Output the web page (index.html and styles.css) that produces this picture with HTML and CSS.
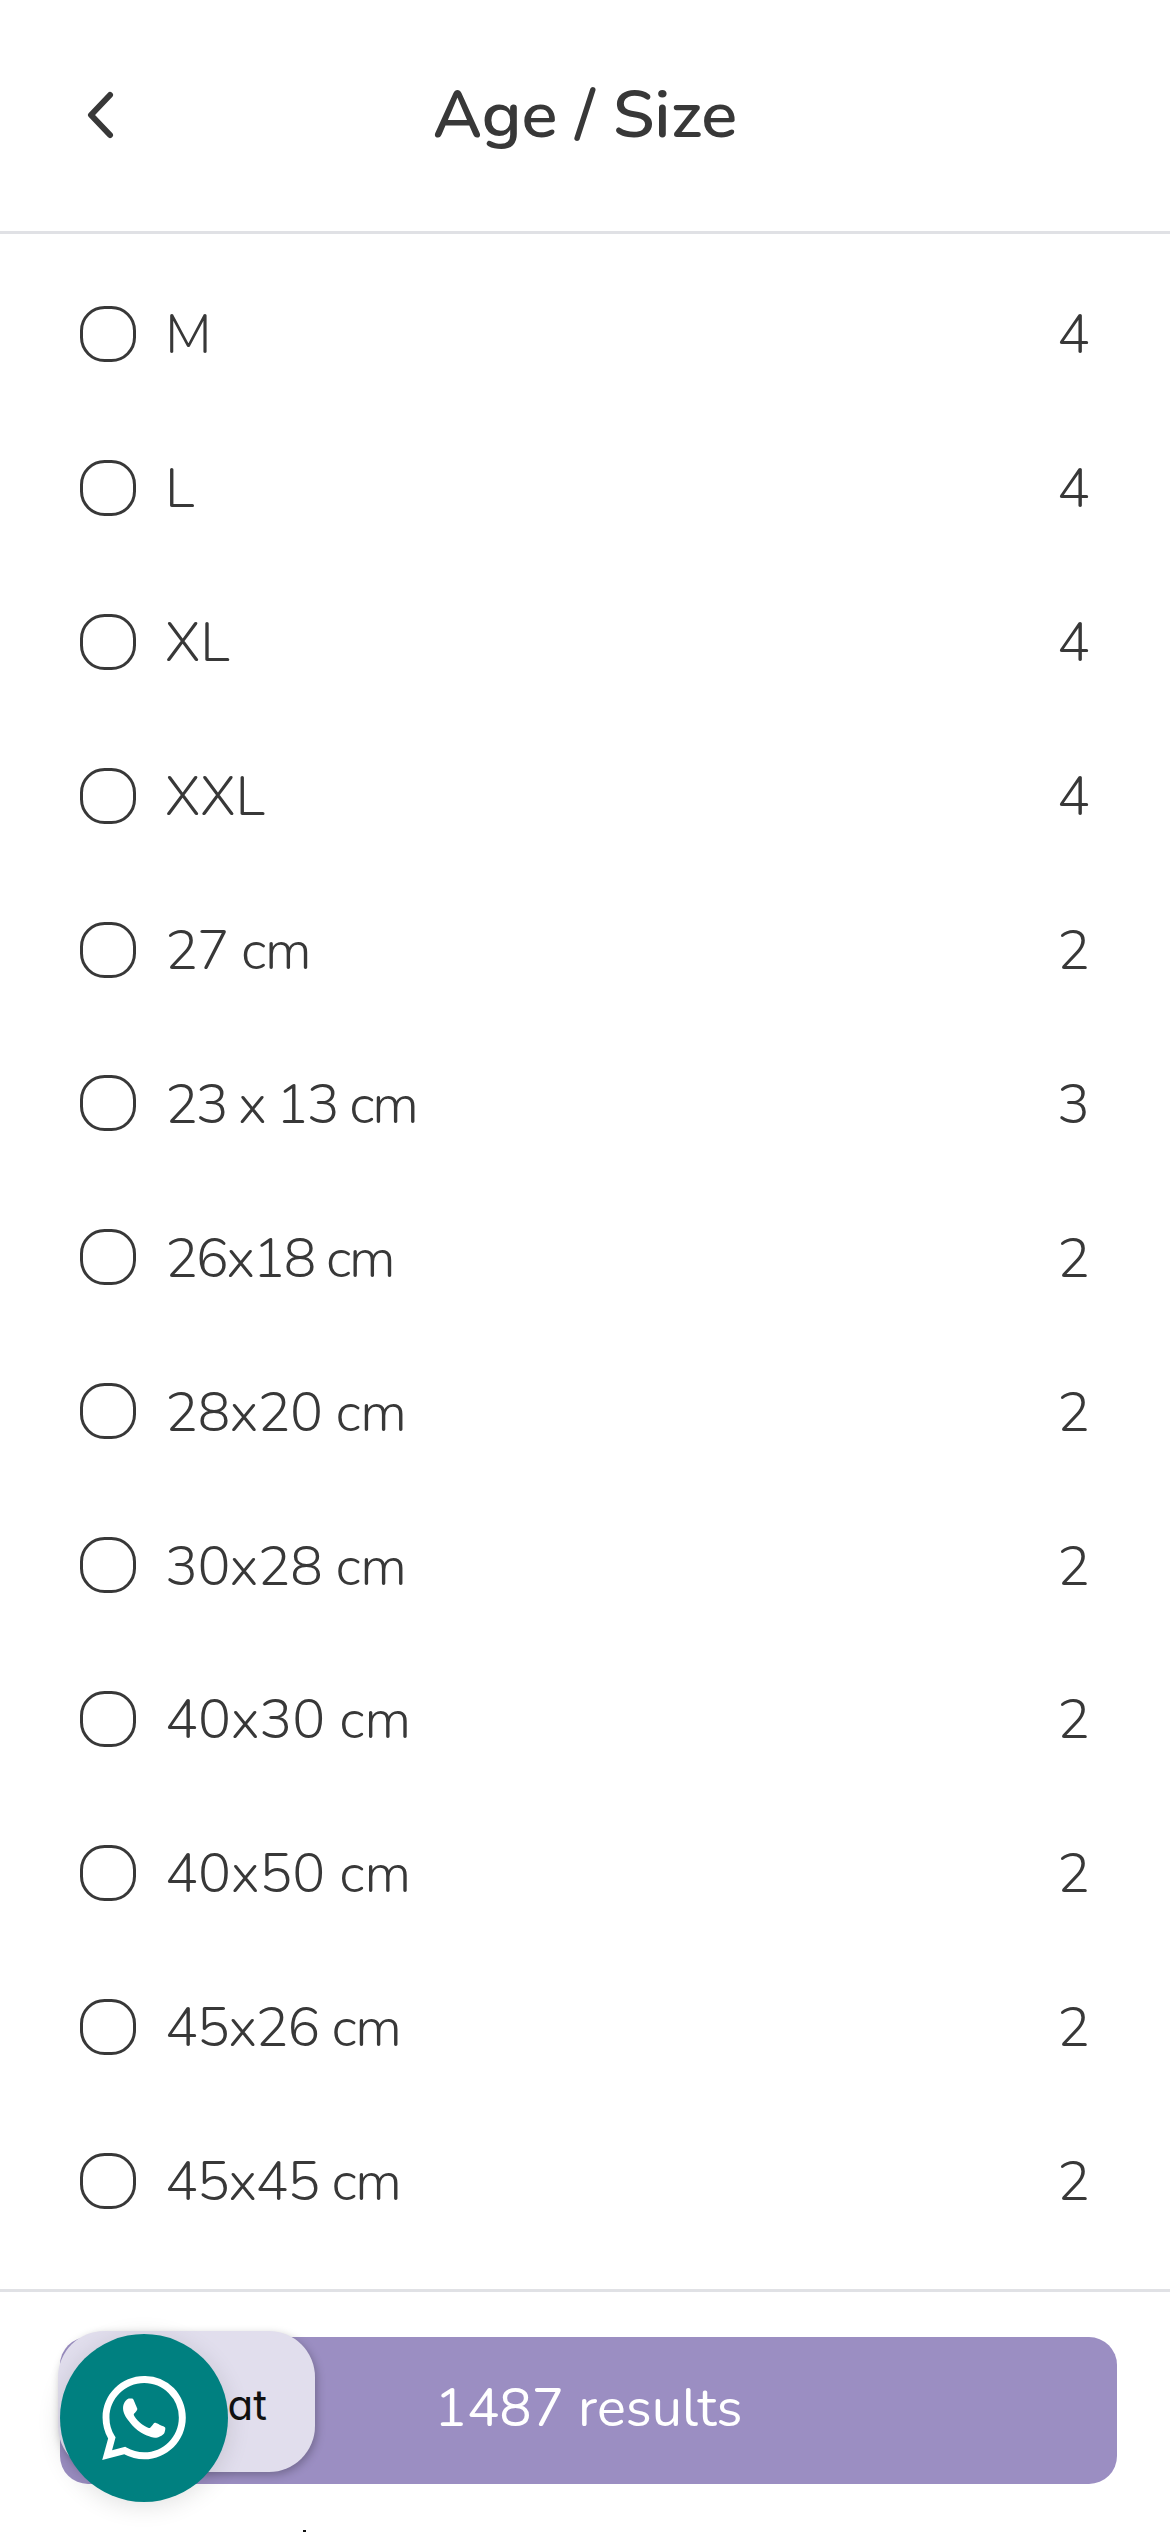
FILE: index.html
```html
<!DOCTYPE html>
<html lang="en">
<head>
    <meta charset="UTF-8">
    <meta name="viewport" content="width=device-width, initial-scale=1.0">
    <title>Age / Size</title>
    <link rel="stylesheet" href="styles.css">
</head>
<body>
    <div id="container">
        <div class="header">
            <svg class="back" width="30" height="50" viewBox="0 0 30 50">
                <path d="M25 5 L6 25 L25 45" fill="none" stroke="#383838" stroke-width="6" stroke-linecap="round" stroke-linejoin="round"/>
            </svg>
            <h1>Age / Size</h1>
        </div>

        <div class="list">
            <div class="row"><span class="radio"></span><span class="name">M</span><span class="count">4</span></div>
            <div class="row"><span class="radio"></span><span class="name">L</span><span class="count">4</span></div>
            <div class="row"><span class="radio"></span><span class="name">XL</span><span class="count">4</span></div>
            <div class="row"><span class="radio"></span><span class="name">XXL</span><span class="count">4</span></div>
            <div class="row"><span class="radio"></span><span class="name digits">27 cm</span><span class="count">2</span></div>
            <div class="row"><span class="radio"></span><span class="name tight">23 x 13 cm</span><span class="count">3</span></div>
            <div class="row"><span class="radio"></span><span class="name tight">26x18 cm</span><span class="count">2</span></div>
            <div class="row"><span class="radio"></span><span class="name loose">28x20 cm</span><span class="count">2</span></div>
            <div class="row"><span class="radio"></span><span class="name loose">30x28 cm</span><span class="count">2</span></div>
            <div class="row"><span class="radio"></span><span class="name">40x30 cm</span><span class="count">2</span></div>
            <div class="row"><span class="radio"></span><span class="name">40x50 cm</span><span class="count">2</span></div>
            <div class="row"><span class="radio"></span><span class="name digits">45x26 cm</span><span class="count">2</span></div>
            <div class="row"><span class="radio"></span><span class="name digits">45x45 cm</span><span class="count">2</span></div>
        </div>

        <div class="footer">
            <div class="results">1487 results</div>
            <div class="chat">Chat</div>
            <div class="whatsapp">
                <svg width="84" height="84" viewBox="0 0 24 24">
                    <path fill="#fff" d="M17.47 14.38c-.3-.15-1.76-.87-2.03-.97-.27-.1-.47-.15-.67.15-.2.3-.77.97-.94 1.16-.17.2-.35.22-.64.08-.3-.15-1.26-.46-2.39-1.48-.88-.79-1.48-1.76-1.65-2.06-.17-.3-.02-.46.13-.6.13-.13.3-.35.45-.52.15-.17.2-.3.3-.5.1-.2.05-.37-.03-.52-.07-.15-.67-1.61-.92-2.21-.24-.58-.49-.5-.67-.51h-.57c-.2 0-.52.07-.79.37-.27.3-1.04 1.02-1.04 2.48s1.07 2.88 1.21 3.07c.15.2 2.1 3.2 5.08 4.49.71.3 1.26.49 1.69.62.71.23 1.36.2 1.87.12.57-.09 1.76-.72 2.01-1.41.25-.7.25-1.29.17-1.41-.07-.13-.27-.2-.57-.35zM12.05 21.79h-.01c-1.78 0-3.53-.48-5.05-1.38l-.36-.21-3.75.98 1-3.65-.24-.37A9.86 9.86 0 0 1 2.13 11.9C2.13 6.45 6.57 2 12.05 2c2.64 0 5.13 1.03 7 2.9a9.83 9.83 0 0 1 2.9 7c0 5.46-4.44 9.89-9.9 9.89zM20.52 3.45A11.82 11.82 0 0 0 12.05 0C5.5 0 .16 5.34.16 11.89c0 2.1.55 4.14 1.59 5.95L.06 24l6.3-1.65a11.88 11.88 0 0 0 5.68 1.45h.01c6.55 0 11.89-5.34 11.89-11.89 0-3.18-1.24-6.17-3.42-8.46z"/>
                </svg>
            </div>
            <div class="speck"></div>
        </div>
    </div>
</body>
</html>
```

FILE: styles.css
```css
* {
    box-sizing: border-box;
}

html, body {
    margin: 0;
    padding: 0;
}

body {
    background-color: white;
    font-family: "Nunito", "Lato", "Noto Sans", sans-serif;
    color: #383838;
}

#container {
    width: 1170px;
    height: 2532px;
    overflow: hidden;
}

.header {
    position: relative;
    height: 234px;
    border-bottom: 3px solid #e0e1e5;
    display: flex;
    align-items: center;
    justify-content: center;
}

.header h1 {
    margin: 0;
    font-size: 67px;
    font-weight: 600;
    line-height: 1;
}

.back {
    position: absolute;
    left: 85px;
    top: 90px;
}

.list {
    height: 2055px;
    padding-top: 23px;
}

.row {
    height: 153.9px;
    padding: 0 80px;
    display: flex;
    align-items: center;
    font-size: 55px;
    font-weight: 300;
}

.radio {
    width: 56px;
    height: 56px;
    border: 3px solid #383838;
    border-radius: 44%;
    margin-right: 29px;
}

.name {
    flex: 1;
    padding-top: 2px;
}

.digits {
    letter-spacing: -1.3px;
}

.tight {
    letter-spacing: -2.2px;
}

.loose {
    letter-spacing: -0.6px;
}

.count {
    padding-top: 2px;
}

.footer {
    position: relative;
    height: 243px;
    border-top: 3px solid #e0e1e5;
}

.results {
    position: absolute;
    left: 60px;
    top: 45px;
    width: 1057px;
    height: 147px;
    padding-bottom: 5px;
    border-radius: 28px;
    background-color: #9b8ec2;
    color: white;
    font-size: 54px;
    font-weight: 400;
    display: flex;
    align-items: center;
    justify-content: center;
}

.chat {
    position: absolute;
    left: 58px;
    top: 39px;
    width: 257px;
    height: 141px;
    padding-top: 6px;
    padding-right: 48px;
    border-radius: 46px;
    background-color: #e1deed;
    box-shadow: 2px 3px 8px rgba(0, 0, 0, 0.25);
    color: #111;
    font-family: "Inter", sans-serif;
    font-feature-settings: "cv11";
    font-size: 42px;
    display: flex;
    align-items: center;
    justify-content: flex-end;
}

.whatsapp {
    position: absolute;
    left: 60px;
    top: 42px;
    width: 168px;
    height: 168px;
    border-radius: 50%;
    background-color: #008080;
    box-shadow: 0 4px 24px rgba(0, 0, 0, 0.12);
    display: flex;
    align-items: center;
    justify-content: center;
}

.speck {
    position: absolute;
    left: 303px;
    top: 238px;
    width: 3px;
    height: 3px;
    background-color: #111;
}
```
